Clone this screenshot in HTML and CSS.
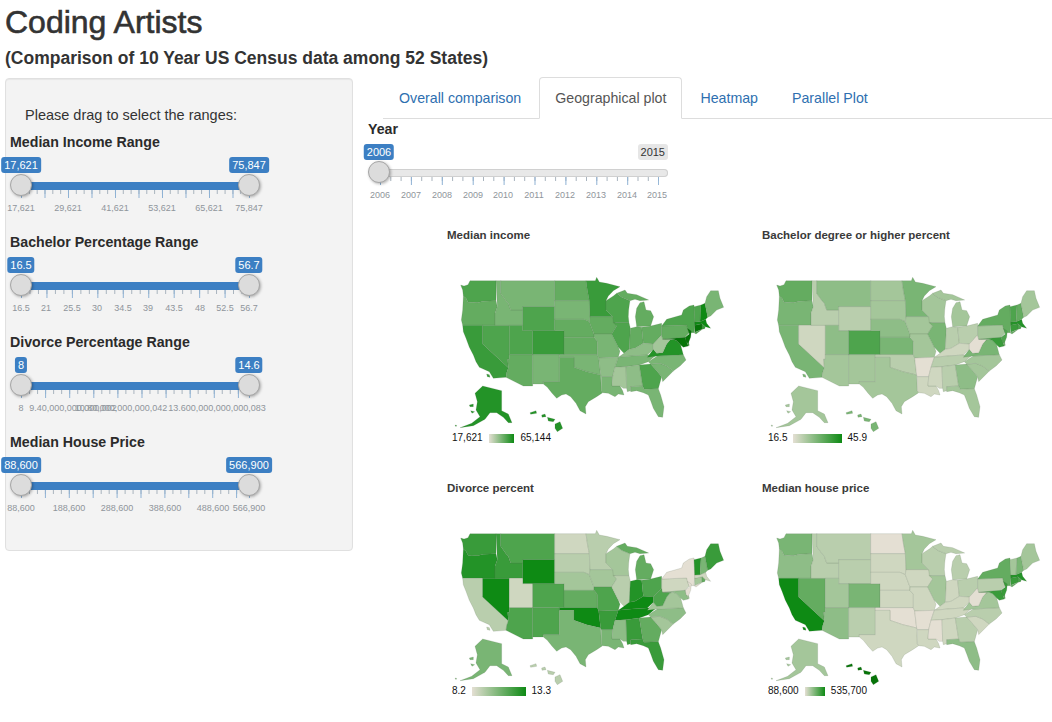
FILE: index.html
```html
<!DOCTYPE html>
<html lang="en">
<head>
<meta charset="utf-8">
<title>Coding Artists</title>
<link rel="stylesheet" href="styles.css">
</head>
<body>
<svg class="defs" width="0" height="0" aria-hidden="true">
  <symbol id="usa" viewBox="0 0 900 516">
    <polygon fill="var(--wa)" points="62,75 72,78 84,74 90,62 168,62 168,122 130,124 112,128 95,127 85,128 78,115 70,108 68,90"/>
    <polygon fill="var(--or)" points="70,108 78,115 85,128 95,127 112,128 130,124 168,122 172,140 165,160 165,196 128,196 68,196 64,180 68,150"/>
    <polygon fill="var(--ca)" points="68,196 128,196 128,252 205,323 200,338 198,352 160,355 148,335 118,322 108,305 100,285 88,262 78,235 70,215"/>
    <polygon fill="var(--ca)" points="140,342 148,344 150,352 142,350"/>
    <polygon fill="var(--nv)" points="128,196 208,196 208,298 203,298 205,323 128,252"/>
    <polygon fill="var(--id)" points="168,62 182,62 182,100 198,122 205,130 212,150 248,150 248,196 165,196 165,160 172,140"/>
    <polygon fill="var(--mt)" points="182,62 344,62 344,140 248,140 248,150 212,150 205,130 198,122 182,100"/>
    <polygon fill="var(--wy)" points="248,140 344,140 344,212 248,212"/>
    <polygon fill="var(--ut)" points="208,196 248,196 248,212 278,212 278,284 208,284"/>
    <polygon fill="var(--co)" points="278,212 372,212 372,284 278,284"/>
    <polygon fill="var(--az)" points="208,284 278,284 278,378 250,378 198,352 200,338 205,323 203,298 208,298"/>
    <polygon fill="var(--nm)" points="278,284 358,284 358,365 310,365 310,372 278,372"/>
    <polygon fill="var(--nd)" points="344,62 438,62 442,90 448,122 344,122"/>
    <polygon fill="var(--sd)" points="344,122 448,122 450,170 448,185 432,178 344,178"/>
    <polygon fill="var(--ne)" points="344,178 432,178 448,185 462,222 462,232 372,232 372,212 344,212"/>
    <polygon fill="var(--ks)" points="372,232 462,232 472,244 472,284 372,284"/>
    <polygon fill="var(--ok)" points="358,284 472,284 476,294 482,345 440,335 402,322 402,292 358,292"/>
    <polygon fill="var(--tx)" points="358,292 402,292 402,322 440,335 482,345 484,392 488,398 470,410 445,425 436,440 438,462 420,452 408,430 392,410 378,402 365,405 350,415 335,398 322,382 310,372 310,365 358,365"/>
    <polygon fill="var(--mn)" points="438,62 466,62 470,52 478,66 500,70 540,80 520,92 505,108 498,122 498,150 518,170 450,170 448,122 442,90"/>
    <polygon fill="var(--ia)" points="450,170 518,170 530,198 515,222 462,222 448,185"/>
    <polygon fill="var(--mo)" points="462,222 515,222 535,262 540,274 535,292 476,294 472,284 472,244 462,232"/>
    <polygon fill="var(--ar)" points="476,294 535,292 525,322 518,350 484,350 482,345"/>
    <polygon fill="var(--la)" points="484,350 518,350 516,378 540,378 548,392 552,405 535,402 525,410 505,400 488,398 484,392"/>
    <polygon fill="var(--wi)" points="498,122 520,108 530,100 545,112 570,122 568,135 566,150 565,170 567,188 520,188 518,170 498,150"/>
    <polygon fill="var(--il)" points="520,188 567,188 571,205 568,268 552,280 535,262 515,222 530,198"/>
    <polygon fill="var(--mi)" points="590,200 586,170 590,145 600,128 612,125 618,150 632,152 641,170 632,198"/>
    <polygon fill="var(--mi)" points="530,100 555,90 562,100 590,104 626,120 600,122 585,118 570,122 545,112"/>
    <polygon fill="var(--in)" points="571,205 590,200 605,202 610,250 585,265 568,268"/>
    <polygon fill="var(--oh)" points="605,202 632,198 665,190 665,225 640,252 610,250"/>
    <polygon fill="var(--ky)" points="535,292 552,280 568,268 585,265 610,250 640,252 640,268 622,285 575,288"/>
    <polygon fill="var(--tn)" points="535,292 575,288 622,285 652,282 625,305 598,315 558,320 525,322"/>
    <polygon fill="var(--ms)" points="525,322 558,320 560,385 550,385 540,378 516,378 518,350"/>
    <polygon fill="var(--al)" points="558,320 598,315 608,378 572,380 572,392 562,395 560,385"/>
    <polygon fill="var(--ga)" points="598,315 632,312 650,332 665,350 655,386 612,388 608,378"/>
    <polygon fill="var(--fl)" points="572,380 608,378 612,388 655,386 662,405 672,440 668,472 655,470 640,445 633,425 625,405 610,398 590,392 572,395"/>
    <polygon fill="var(--sc)" points="632,312 660,310 680,318 700,333 668,365 665,350 650,332"/>
    <polygon fill="var(--nc)" points="652,288 730,284 738,300 720,318 700,333 680,318 660,310 632,312 625,305"/>
    <polygon fill="var(--va)" points="622,292 640,268 650,280 668,278 680,252 690,240 700,238 710,242 722,255 730,284 652,288"/>
    <polygon fill="var(--wv)" points="640,252 665,225 668,238 695,238 690,240 680,252 668,278 650,280 640,268"/>
    <polygon fill="var(--pa)" points="665,198 740,195 748,218 735,232 668,238 665,225"/>
    <polygon fill="var(--ny)" points="665,198 680,178 725,165 730,150 748,138 762,135 765,190 762,218 748,218 742,205 740,195"/>
    <polygon fill="var(--ny)" points="762,218 785,209 768,222"/>
    <polygon fill="var(--md)" points="668,238 735,232 745,258 730,262 722,255 710,242 700,238 695,238"/>
    <polygon fill="var(--de)" points="735,232 742,232 748,256 745,258"/>
    <polygon fill="var(--nj)" points="742,205 754,213 752,232 745,250 738,245 736,232 748,222"/>
    <polygon fill="var(--ct)" points="764,196 786,191 786,208 764,217"/>
    <polygon fill="var(--ma)" points="764,186 780,185 797,178 800,190 812,205 796,200 786,191 764,196"/>
    <polygon fill="var(--ri)" points="786,191 796,200 794,206 786,208"/>
    <polygon fill="var(--vt)" points="762,140 783,135 780,185 764,186"/>
    <polygon fill="var(--nh)" points="783,135 795,130 803,172 797,178 780,185"/>
    <polygon fill="var(--me)" points="795,130 800,110 812,92 835,92 840,115 851,142 830,150 812,168 803,172"/>
    <polygon fill="var(--ak)" points="105,400 128,378 185,392 185,452 205,462 216,488 205,488 190,472 170,458 150,458 135,478 100,497 60,503 95,490 120,470 108,450 112,425"/>
    <polygon fill="var(--ak)" points="88,435 100,432 100,440 90,440"/>
    <polygon fill="var(--ak)" points="92,452 104,455 96,460"/>
    <polygon fill="var(--ak)" points="45,495 50,496 48,500"/>
    <polygon fill="var(--hi)" points="270,458 288,452 290,460 272,463"/>
    <polygon fill="var(--hi)" points="305,465 315,462 318,470 306,472"/>
    <polygon fill="var(--hi)" points="322,472 345,478 340,485 325,483"/>
    <polygon fill="var(--hi)" points="345,492 360,485 368,505 352,515 345,505"/>
  </symbol>
</svg>

<header class="page-head">
  <h1>Coding Artists</h1>
  <h2>(Comparison of 10 Year US Census data among 52 States)</h2>
</header>

<div class="layout">
  <aside class="panel">
    <p class="intro">Please drag to select the ranges:</p>

    <div class="field">
      <label>Median Income Range</label>
      <div class="slider">
        <div class="track track-fill"></div>
        <svg class="ticks ticks-income"><line class="minor" x2="229" y1="2" y2="2"/><line class="major" x2="229" y1="4" y2="4"/><line class="major end" x1="228" x2="229" y1="4" y2="4"/></svg>
        <span class="bubble from">17,621</span><span class="bubble to">75,847</span>
        <i class="handle from"></i><i class="handle to"></i>
        <span class="tl" style="left:11px">17,621</span><span class="tl" style="left:58px">29,621</span><span class="tl" style="left:105px">41,621</span><span class="tl" style="left:152px">53,621</span><span class="tl" style="left:199px">65,621</span><span class="tl" style="left:239px">75,847</span>
      </div>
    </div>

    <div class="field">
      <label>Bachelor Percentage Range</label>
      <div class="slider">
        <div class="track track-fill"></div>
        <svg class="ticks ticks-bach"><line class="minor" x2="229" y1="2" y2="2"/><line class="major" x2="229" y1="4" y2="4"/><line class="major end" x1="228" x2="229" y1="4" y2="4"/></svg>
        <span class="bubble from">16.5</span><span class="bubble to">56.7</span>
        <i class="handle from"></i><i class="handle to"></i>
        <span class="tl" style="left:11px">16.5</span><span class="tl" style="left:36px">21</span><span class="tl" style="left:62px">25.5</span><span class="tl" style="left:87px">30</span><span class="tl" style="left:113px">34.5</span><span class="tl" style="left:138px">39</span><span class="tl" style="left:164px">43.5</span><span class="tl" style="left:190px">48</span><span class="tl" style="left:215px">52.5</span><span class="tl" style="left:239px">56.7</span>
      </div>
    </div>

    <div class="field">
      <label>Divorce Percentage Range</label>
      <div class="slider">
        <div class="track track-fill"></div>
        <svg class="ticks ticks-div"><line class="minor" x2="229" y1="2" y2="2"/><line class="major" x2="229" y1="4" y2="4"/><line class="major end" x1="228" x2="229" y1="4" y2="4"/></svg>
        <span class="bubble from">8</span><span class="bubble to">14.6</span>
        <i class="handle from"></i><i class="handle to"></i>
        <span class="tl" style="left:11px">8</span><span class="tl" style="left:63px">9.40,000,000,000,002</span><span class="tl" style="left:111px">10.80,000,000,000,042</span><span class="tl" style="left:207px">13.600,000,000,000,083</span>
      </div>
    </div>

    <div class="field">
      <label>Median House Price</label>
      <div class="slider">
        <div class="track track-fill"></div>
        <svg class="ticks ticks-house"><line class="minor" x2="229" y1="2" y2="2"/><line class="major" x2="229" y1="4" y2="4"/><line class="major end" x1="228" x2="229" y1="4" y2="4"/></svg>
        <span class="bubble from">88,600</span><span class="bubble to">566,900</span>
        <i class="handle from"></i><i class="handle to"></i>
        <span class="tl" style="left:11px">88,600</span><span class="tl" style="left:59px">188,600</span><span class="tl" style="left:107px">288,600</span><span class="tl" style="left:155px">388,600</span><span class="tl" style="left:203px">488,600</span><span class="tl" style="left:239px">566,900</span>
      </div>
    </div>
  </aside>

  <main class="content">
    <ul class="tabs">
      <li><a href="#">Overall comparison</a></li>
      <li class="active"><a href="#">Geographical plot</a></li>
      <li><a href="#">Heatmap</a></li>
      <li><a href="#">Parallel Plot</a></li>
    </ul>

    <div class="pane">
      <label class="year-label">Year</label>
      <div class="slider slider-year">
        <div class="track"></div>
        <svg class="ticks ticks-year"><line class="minor" x2="279" y1="2" y2="2"/><line class="major" x2="279" y1="4" y2="4"/></svg>
        <span class="bubble from">2006</span><span class="bubble max">2015</span>
        <i class="handle from"></i>
        <span class="tl" style="left:12px">2006</span><span class="tl" style="left:43px">2007</span><span class="tl" style="left:74px">2008</span><span class="tl" style="left:105px">2009</span><span class="tl" style="left:135px">2010</span><span class="tl" style="left:166px">2011</span><span class="tl" style="left:197px">2012</span><span class="tl" style="left:228px">2013</span><span class="tl" style="left:259px">2014</span><span class="tl" style="left:289px">2015</span>
      </div>

      <div class="maps">
        <section class="map-card map-income">
          <h3>Median income</h3>
          <svg class="map" viewBox="0 0 900 516"><use href="#usa"/></svg>
          <div class="legend"><span>17,621</span><b></b><span>65,144</span></div>
        </section>
        <section class="map-card map-bach">
          <h3>Bachelor degree or higher percent</h3>
          <svg class="map" viewBox="0 0 900 516"><use href="#usa"/></svg>
          <div class="legend"><span>16.5</span><b></b><span>45.9</span></div>
        </section>
        <section class="map-card map-div">
          <h3>Divorce percent</h3>
          <svg class="map" viewBox="0 0 900 516"><use href="#usa"/></svg>
          <div class="legend"><span>8.2</span><b></b><span>13.3</span></div>
        </section>
        <section class="map-card map-house">
          <h3>Median house price</h3>
          <svg class="map" viewBox="0 0 900 516"><use href="#usa"/></svg>
          <div class="legend"><span>88,600</span><b></b><span>535,700</span></div>
        </section>
      </div>
    </div>
  </main>
</div>
</body>
</html>
```
FILE: styles.css
```css
:root {
  --g0: #e4dfd3; --g1: #cfd7c0; --g2: #b9cead; --g3: #a4c69a; --g4: #8ebd87; --g5: #79b574;
  --g6: #64ac60; --g7: #4ea44d; --g8: #399b3a; --g9: #239327; --g10: #0e8a14; --g11: #067408;
  --blue: #3c7fc3;
}

* { box-sizing: border-box; }

html, body { margin: 0; overflow: hidden; }

body {
  height: 722px;
  padding: 0 0 0 5px;
  font: 14px/20px "Liberation Sans", Arial, sans-serif;
  color: #333;
  background: #fff;
}

.defs { position: absolute; }

.page-head { height: 77px; }

h1 {
  margin: 0;
  padding-top: 5px;
  font-size: 32px;
  line-height: 34px;
  font-weight: 400;
  -webkit-text-stroke: 0.6px #333;
}

h2 {
  margin: 9px 0 0;
  font-size: 17.5px;
  line-height: 20px;
  font-weight: 700;
}

.layout { display: flex; align-items: flex-start; }

/* sidebar */
.panel {
  flex: none;
  width: 348px;
  height: 473px;
  margin-top: 1px;
  padding: 26px 4px 18px;
  background: #f3f3f3;
  border: 1px solid #e0e0e0;
  border-radius: 4px;
  box-shadow: inset 0 1px 1px rgba(0, 0, 0, .05);
}

.intro { margin: 0 0 7px 15px; font-size: 14.5px; }

.field { height: 100px; }

.field label, .year-label {
  display: block;
  font-size: 14.2px;
  font-weight: 700;
  line-height: 20px;
  color: #2b2b2b;
}

/* slider */
.slider { position: relative; height: 60px; width: 250px; margin-top: 5px; }

.track {
  position: absolute;
  left: 11px;
  right: 11px;
  top: 25px;
  height: 8px;
  border-radius: 4px;
  background: #e8e8e8;
  box-shadow: inset 0 0 0 1px #d0d0d0;
}

.track-fill { background: var(--blue); box-shadow: none; border-radius: 0; }

.ticks {
  position: absolute;
  left: 11px;
  top: 33px;
  width: 229px;
  height: 8px;
}

.ticks line { fill: none; }
.minor { stroke: #a9b4be; stroke-width: 4; stroke-dasharray: 1 var(--minor); }
.major { stroke: #8fb2d4; stroke-width: 8; stroke-dasharray: 1 var(--major); }
.major.end { stroke-dasharray: none; }

.ticks-income { --major: 22.5; --minor: 6.83; }
.ticks-bach { --major: 24.45; --minor: 7.48; }
.ticks-div { --major: 23.1; --minor: 7.03; }
.ticks-house { --major: 22.9; --minor: 6.97; }
.ticks-year { --major: 29.9; --minor: 9.3; left: 12px; width: 279px; }

.bubble {
  position: absolute;
  top: 0;
  padding: 0 3px;
  height: 16px;
  font-size: 11px;
  line-height: 16px;
  color: #fff;
  background: var(--blue);
  border-radius: 3px;
  white-space: nowrap;
  transform: translateX(-50%);
}

.bubble.from { left: 11px; }
.bubble.to { left: 239px; }
.bubble.max { right: 0; transform: none; color: #333; background: #e6e6e6; }

.handle {
  position: absolute;
  top: 17px;
  width: 22px;
  height: 22px;
  border-radius: 50%;
  background: #dcdcdc;
  border: 1px solid #a6a6a6;
  box-shadow: 1px 1px 3px rgba(0, 0, 0, .3);
}

.handle.from { left: 0; }
.handle.to { left: 228px; }

.tl {
  position: absolute;
  top: 46px;
  font-size: 9px;
  line-height: 10px;
  color: #8f959b;
  white-space: nowrap;
  transform: translateX(-50%);
}

.slider-year { width: 300px; }
.slider-year .track { right: 0; }

/* tabs */
.content { flex: 1; margin-left: 15px; min-width: 0; }

.tabs {
  display: flex;
  margin: 0 0 0 15px;
  padding: 0;
  list-style: none;
  border-bottom: 1px solid #ddd;
  height: 42px;
  font-size: 14.2px;
}

.tabs li { margin-right: 2px; height: 42px; }

.tabs a {
  display: block;
  height: 42px;
  padding: 10px 15px;
  border: 1px solid transparent;
  border-radius: 4px 4px 0 0;
  color: #2e6fb0;
  text-decoration: none;
}

.tabs .active a {
  color: #555;
  background: #fff;
  border-color: #ddd #ddd #fff;
}

.pane { height: 600px; }

/* maps */
.maps {
  display: grid;
  grid-template-columns: 316px 316px;
  grid-auto-rows: 215px;
  row-gap: 38px;
  margin: 24px 0 0 72px;
}

.map-card h3 {
  margin: 0 0 18px 7px;
  font-size: 11.5px;
  line-height: 14px;
  font-weight: 700;
  color: #3a3a3a;
  white-space: nowrap;
}

.map-bach h3, .map-house h3 { margin-left: 6px; }

.map {
  display: block;
  width: 300px;
  height: 172px;
  stroke: rgba(80, 105, 75, .24);
  stroke-width: 2;
  stroke-linejoin: round;
}

.legend {
  display: flex;
  align-items: center;
  gap: 6px;
  width: 99px;
  height: 10px;
  margin: 1px 0 0 12px;
  font-size: 10px;
  line-height: 10px;
  color: #111;
}

.legend b { flex: 1; height: 9px; background: linear-gradient(90deg, var(--g0), var(--g10)); }

.map-income {
  --wa: var(--g7); --or: var(--g6); --ca: var(--g8); --nv: var(--g7); --id: var(--g5); --mt: var(--g5);
  --wy: var(--g7); --ut: var(--g7); --co: var(--g8); --az: var(--g6); --nm: var(--g5); --nd: var(--g6);
  --sd: var(--g5); --ne: var(--g6); --ks: var(--g6); --ok: var(--g5); --tx: var(--g6); --mn: var(--g8);
  --ia: var(--g6); --mo: var(--g5); --ar: var(--g4); --la: var(--g5); --wi: var(--g7); --il: var(--g7);
  --mi: var(--g6); --in: var(--g6); --oh: var(--g6); --ky: var(--g4); --tn: var(--g5); --ms: var(--g3);
  --al: var(--g4); --ga: var(--g7); --fl: var(--g5); --sc: var(--g5); --nc: var(--g5); --va: var(--g9);
  --wv: var(--g3); --pa: var(--g6); --ny: var(--g7); --md: var(--g11); --de: var(--g8); --nj: var(--g11);
  --ct: var(--g11); --ma: var(--g10); --ri: var(--g8); --vt: var(--g7); --nh: var(--g10); --me: var(--g5);
  --ak: var(--g9); --hi: var(--g9);
}

.map-bach {
  --wa: var(--g6); --or: var(--g5); --ca: var(--g5); --nv: var(--g1); --id: var(--g2); --mt: var(--g4);
  --wy: var(--g2); --ut: var(--g4); --co: var(--g7); --az: var(--g3); --nm: var(--g3); --nd: var(--g3);
  --sd: var(--g3); --ne: var(--g4); --ks: var(--g5); --ok: var(--g2); --tx: var(--g3); --mn: var(--g5);
  --ia: var(--g3); --mo: var(--g3); --ar: var(--g0); --la: var(--g1); --wi: var(--g3); --il: var(--g5);
  --mi: var(--g3); --in: var(--g2); --oh: var(--g2); --ky: var(--g1); --tn: var(--g2); --ms: var(--g1);
  --al: var(--g2); --ga: var(--g4); --fl: var(--g3); --sc: var(--g3); --nc: var(--g3); --va: var(--g5);
  --wv: var(--g0); --pa: var(--g3); --ny: var(--g6); --md: var(--g8); --de: var(--g5); --nj: var(--g7);
  --ct: var(--g8); --ma: var(--g9); --ri: var(--g7); --vt: var(--g7); --nh: var(--g6); --me: var(--g3);
  --ak: var(--g3); --hi: var(--g5);
}

.map-div {
  --wa: var(--g8); --or: var(--g9); --ca: var(--g2); --nv: var(--g10); --id: var(--g8); --mt: var(--g7);
  --wy: var(--g10); --ut: var(--g1); --co: var(--g7); --az: var(--g7); --nm: var(--g7); --nd: var(--g1);
  --sd: var(--g2); --ne: var(--g3); --ks: var(--g6); --ok: var(--g10); --tx: var(--g5); --mn: var(--g2);
  --ia: var(--g3); --mo: var(--g7); --ar: var(--g8); --la: var(--g5); --wi: var(--g3); --il: var(--g2);
  --mi: var(--g6); --in: var(--g9); --oh: var(--g7); --ky: var(--g10); --tn: var(--g10); --ms: var(--g4);
  --al: var(--g8); --ga: var(--g6); --fl: var(--g8); --sc: var(--g3); --nc: var(--g4); --va: var(--g3);
  --wv: var(--g7); --pa: var(--g1); --ny: var(--g0); --md: var(--g4); --de: var(--g3); --nj: var(--g0);
  --ct: var(--g3); --ma: var(--g1); --ri: var(--g6); --vt: var(--g9); --nh: var(--g5); --me: var(--g8);
  --ak: var(--g5); --hi: var(--g2);
}

.map-house {
  --wa: var(--g5); --or: var(--g4); --ca: var(--g10); --nv: var(--g6); --id: var(--g2); --mt: var(--g2);
  --wy: var(--g2); --ut: var(--g3); --co: var(--g5); --az: var(--g4); --nm: var(--g2); --nd: var(--g0);
  --sd: var(--g1); --ne: var(--g1); --ks: var(--g1); --ok: var(--g0); --tx: var(--g1); --mn: var(--g3);
  --ia: var(--g1); --mo: var(--g1); --ar: var(--g0); --la: var(--g1); --wi: var(--g2); --il: var(--g3);
  --mi: var(--g2); --in: var(--g1); --oh: var(--g2); --ky: var(--g1); --tn: var(--g1); --ms: var(--g0);
  --al: var(--g1); --ga: var(--g2); --fl: var(--g4); --sc: var(--g1); --nc: var(--g2); --va: var(--g3);
  --wv: var(--g0); --pa: var(--g2); --ny: var(--g6); --md: var(--g8); --de: var(--g6); --nj: var(--g8);
  --ct: var(--g8); --ma: var(--g9); --ri: var(--g7); --vt: var(--g3); --nh: var(--g5); --me: var(--g3);
  --ak: var(--g3); --hi: var(--g11);
}
```
